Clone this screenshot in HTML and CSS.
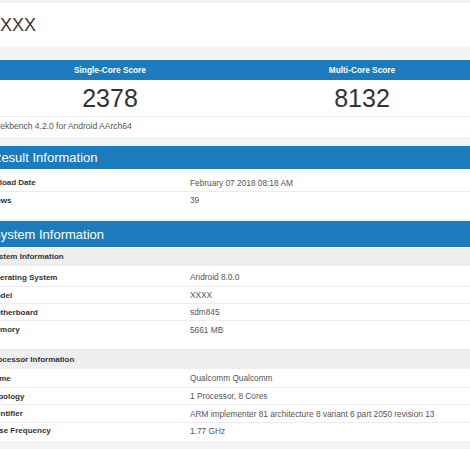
FILE: index.html
```html
<!DOCTYPE html>
<html>
<head>
<meta charset="utf-8">
<link rel="stylesheet" href="styles.css">
</head>
<body>
<div class="page">
  <div class="card title">XXXX</div>

  <div class="card scores">
    <div class="score-head">
      <div class="col">Single-Core Score</div>
      <div class="col">Multi-Core Score</div>
    </div>
    <div class="score-vals">
      <div class="col">2378</div>
      <div class="col">8132</div>
    </div>
    <div class="version">Geekbench 4.2.0 for Android AArch64</div>
  </div>

  <div class="card section result">
    <div class="sec-head">Result Information</div>
    <div class="rows">
      <div class="row"><div class="label">Upload Date</div><div class="value">February 07 2018 08:18 AM</div></div>
      <div class="row"><div class="label">Views</div><div class="value">39</div></div>
    </div>
  </div>

  <div class="card section system">
    <div class="sec-head">System Information</div>
    <div class="sub-head first">System Information</div>
    <div class="rows">
      <div class="row"><div class="label">Operating System</div><div class="value">Android 8.0.0</div></div>
      <div class="row"><div class="label">Model</div><div class="value">XXXX</div></div>
      <div class="row"><div class="label">Motherboard</div><div class="value">sdm845</div></div>
      <div class="row"><div class="label">Memory</div><div class="value">5661 MB</div></div>
    </div>
    <div class="sub-head second">Processor Information</div>
    <div class="rows">
      <div class="row"><div class="label">Name</div><div class="value">Qualcomm Qualcomm</div></div>
      <div class="row"><div class="label">Topology</div><div class="value">1 Processor, 8 Cores</div></div>
      <div class="row"><div class="label">Identifier</div><div class="value">ARM implementer 81 architecture 8 variant 6 part 2050 revision 13</div></div>
      <div class="row"><div class="label">Base Frequency</div><div class="value">1.77 GHz</div></div>
    </div>
  </div>
</div>
</body>
</html>
```

FILE: styles.css
```css
html, body {
  margin: 0;
  padding: 0;
  background: #f3f3f3;
  overflow: hidden;
}

body {
  font-family: "Liberation Sans", Arial, sans-serif;
  color: #333;
}

.page {
  margin-left: -16px;
  width: 504px;
  padding-top: 3px;
  display: flex;
  flex-direction: column;
}

.card {
  background: #fff;
}

.title {
  height: 44px;
  box-sizing: border-box;
  padding-left: 4px;
  font-size: 18px;
  line-height: 44px;
  color: #3a3a3a;
}

.scores {
  margin-top: 13px;
}

.score-head {
  display: flex;
  height: 20px;
  background: #1b7bbd;
  color: #fff;
  font-weight: bold;
  font-size: 8.3px;
  line-height: 20px;
}

.col {
  flex: 1;
  text-align: center;
}

.score-vals {
  display: flex;
  height: 36px;
  line-height: 37px;
  font-size: 25px;
  color: #333;
  border-bottom: 1px solid #ececec;
}

.version {
  height: 20px;
  line-height: 19px;
  padding-left: 5px;
  font-size: 8.5px;
  color: #555;
}

.result {
  margin-top: 9px;
  padding-bottom: 10px;
}

.system {
  margin-top: 2px;
}

.sec-head {
  background: #1b7bbd;
  color: #fff;
  font-size: 13px;
  padding-left: 8px;
}

.result .sec-head {
  height: 23px;
  line-height: 24px;
}

.system .sec-head {
  height: 26px;
  line-height: 27px;
}

.result .rows {
  padding-top: 5px;
}

.system .rows {
  padding-top: 3px;
}

.sub-head {
  background: #efefef;
  font-weight: bold;
  font-size: 8px;
  padding-left: 5px;
  color: #333;
}

.sub-head.first {
  margin-top: 1px;
  height: 18px;
  line-height: 18px;
}

.sub-head.second {
  margin-top: 11px;
  height: 19px;
  line-height: 19px;
  border-top: 1px solid #e6e6e6;
}

.system .rows:last-child {
  padding-top: 1px;
  padding-bottom: 2px;
}

.row {
  display: flex;
  height: 17.3px;
  box-sizing: border-box;
  align-items: center;
  border-top: 1px solid #ececec;
  font-size: 8.3px;
}

.row:first-child {
  border-top: none;
}

.label {
  width: 201px;
  padding-left: 5px;
  font-weight: bold;
  font-size: 8px;
  color: #333;
}

.value {
  color: #555;
}
```
